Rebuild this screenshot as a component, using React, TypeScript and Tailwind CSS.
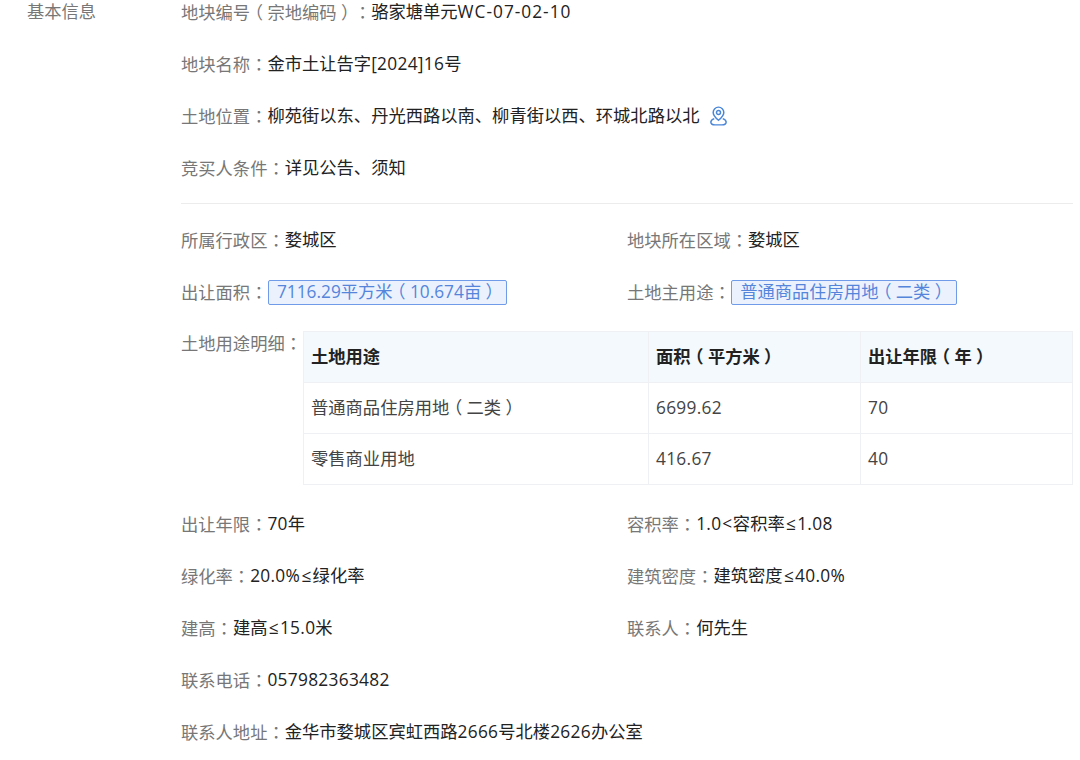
const FONT = "font-['Open_Sans','Noto_Sans_CJK_SC',sans-serif]"

// Open Sans / Noto metrics differ a little from the original font, nudge per character class
function fmt(text: string, tracked = true) {
  return text.split(/([\x21-\x3b\x3d-\x7e]+|[（）：≤<])/).map((part, i) => {
    if (!part) return null
    // halt trims the paren to its ink, so it can be centred in a full cell
    if (part === '（' || part === '）') {
      return <span key={i} className="inline-block w-[1em] text-center [font-feature-settings:'halt']">{part}</span>
    }
    if (part === '：') return <span key={i} className="font-['Noto_Sans_CJK_TC',sans-serif]">{part}</span>
    if (part === '≤') return <span key={i} className="px-[1.3px]">{part}</span>
    if (part === '<') return <span key={i} className="px-[0.8px]">{part}</span>
    if (i % 2 === 0 || !tracked) return part
    if (part.includes('-')) return <span key={i} className="tracking-[1px]">{part}</span>
    return <span key={i} className="tracking-[0.3px]">{part}</span>
  })
}

function Field({ label, children }: { label: string; children: React.ReactNode }) {
  return (
    <div className="flex h-6 items-center whitespace-nowrap leading-6">
      <span className="text-[#777]">{fmt(label + '：')}</span>
      <span className="text-[#222]">{typeof children === 'string' ? fmt(children) : children}</span>
    </div>
  )
}

function Tag({ text }: { text: string }) {
  return (
    <span className="ml-[0.5px] flex h-[25px] items-center rounded-[2px] border border-[#6f9be8] bg-[#ebf2fd] px-2 text-[#5585db]">
      {fmt(text, false)}
    </span>
  )
}

function PinIcon() {
  return (
    <svg width="17" height="20" viewBox="1 1 16 18.3" fill="none" stroke="#4a86d8" strokeWidth="1.4" className="ml-[11px]">
      <path d="M9 14.2C6.4 12 4 9.6 4 6.8a5 5 0 0 1 10 0c0 2.8-2.4 5.2-5 7.4Z" />
      <circle cx="9" cy="6.8" r="1.9" />
      <path d="M5 12.6C3 13.4 1.8 14.5 1.8 15.8c0 1.6 1.8 2.7 4 2.7h6.4c2.2 0 4-1.1 4-2.7 0-1.3-1.2-2.4-3.2-3.2" />
    </svg>
  )
}

const rows = [
  ['普通商品住房用地（二类）', '6699.62', '70'],
  ['零售商业用地', '416.67', '40'],
]

export default function App() {
  return (
    <div className={`${FONT} h-[760px] w-[1080px] overflow-hidden bg-white text-[17.3px] [text-spacing-trim:space-all]`}>
      <div className="flex">
        <div className="w-[181px] shrink-0 pl-[27px] leading-6 text-[#777]">基本信息</div>
        <div className="w-[892px]">
          <div className="flex flex-col gap-7">
            <Field label="地块编号（宗地编码）">骆家塘单元WC-07-02-10</Field>
            <Field label="地块名称">金市土让告字[2024]16号</Field>
            <div className="flex items-center">
              <Field label="土地位置">柳苑街以东、丹光西路以南、柳青街以西、环城北路以北</Field>
              <PinIcon />
            </div>
            <Field label="竞买人条件">详见公告、须知</Field>
          </div>

          <div className="mt-[23px] border-t border-[#ececec]" />

          <div className="mt-6 grid grid-cols-[446px_1fr] gap-y-7">
            <Field label="所属行政区">婺城区</Field>
            <Field label="地块所在区域">婺城区</Field>
            <Field label="出让面积"><Tag text="7116.29平方米（10.674亩）" /></Field>
            <Field label="土地主用途"><Tag text="普通商品住房用地（二类）" /></Field>
          </div>

          <div className="mt-[27px] flex">
            <div className="w-[122px] shrink-0 leading-6 whitespace-nowrap text-[#777]">{fmt('土地用途明细：')}</div>
            <table className="w-[770px] table-fixed border-collapse">
              <thead>
                <tr className="h-[51px] bg-[#f4f9fd] text-left font-bold text-[#222]">
                  <th className="w-[345px] border border-[#eef0f3] px-[7px]">土地用途</th>
                  <th className="w-[212px] border border-[#eef0f3] px-[7px]">{fmt('面积（平方米）')}</th>
                  <th className="border border-[#eef0f3] px-[7px]">{fmt('出让年限（年）')}</th>
                </tr>
              </thead>
              <tbody>
                {rows.map((r) => (
                  <tr key={r[0]} className="h-[51px] text-[#444]">
                    {r.map((c) => (
                      <td key={c} className="border border-[#eef0f3] px-[7px]">{fmt(c)}</td>
                    ))}
                  </tr>
                ))}
              </tbody>
            </table>
          </div>

          <div className="mt-[27px] grid grid-cols-[446px_1fr] gap-y-7">
            <Field label="出让年限">70年</Field>
            <Field label="容积率">1.0&lt;容积率≤1.08</Field>
            <Field label="绿化率">20.0%≤绿化率</Field>
            <Field label="建筑密度">建筑密度≤40.0%</Field>
            <Field label="建高">建高≤15.0米</Field>
            <Field label="联系人">何先生</Field>
            <Field label="联系电话">057982363482</Field>
            <div />
            <Field label="联系人地址">金华市婺城区宾虹西路2666号北楼2626办公室</Field>
          </div>
        </div>
      </div>
    </div>
  )
}
